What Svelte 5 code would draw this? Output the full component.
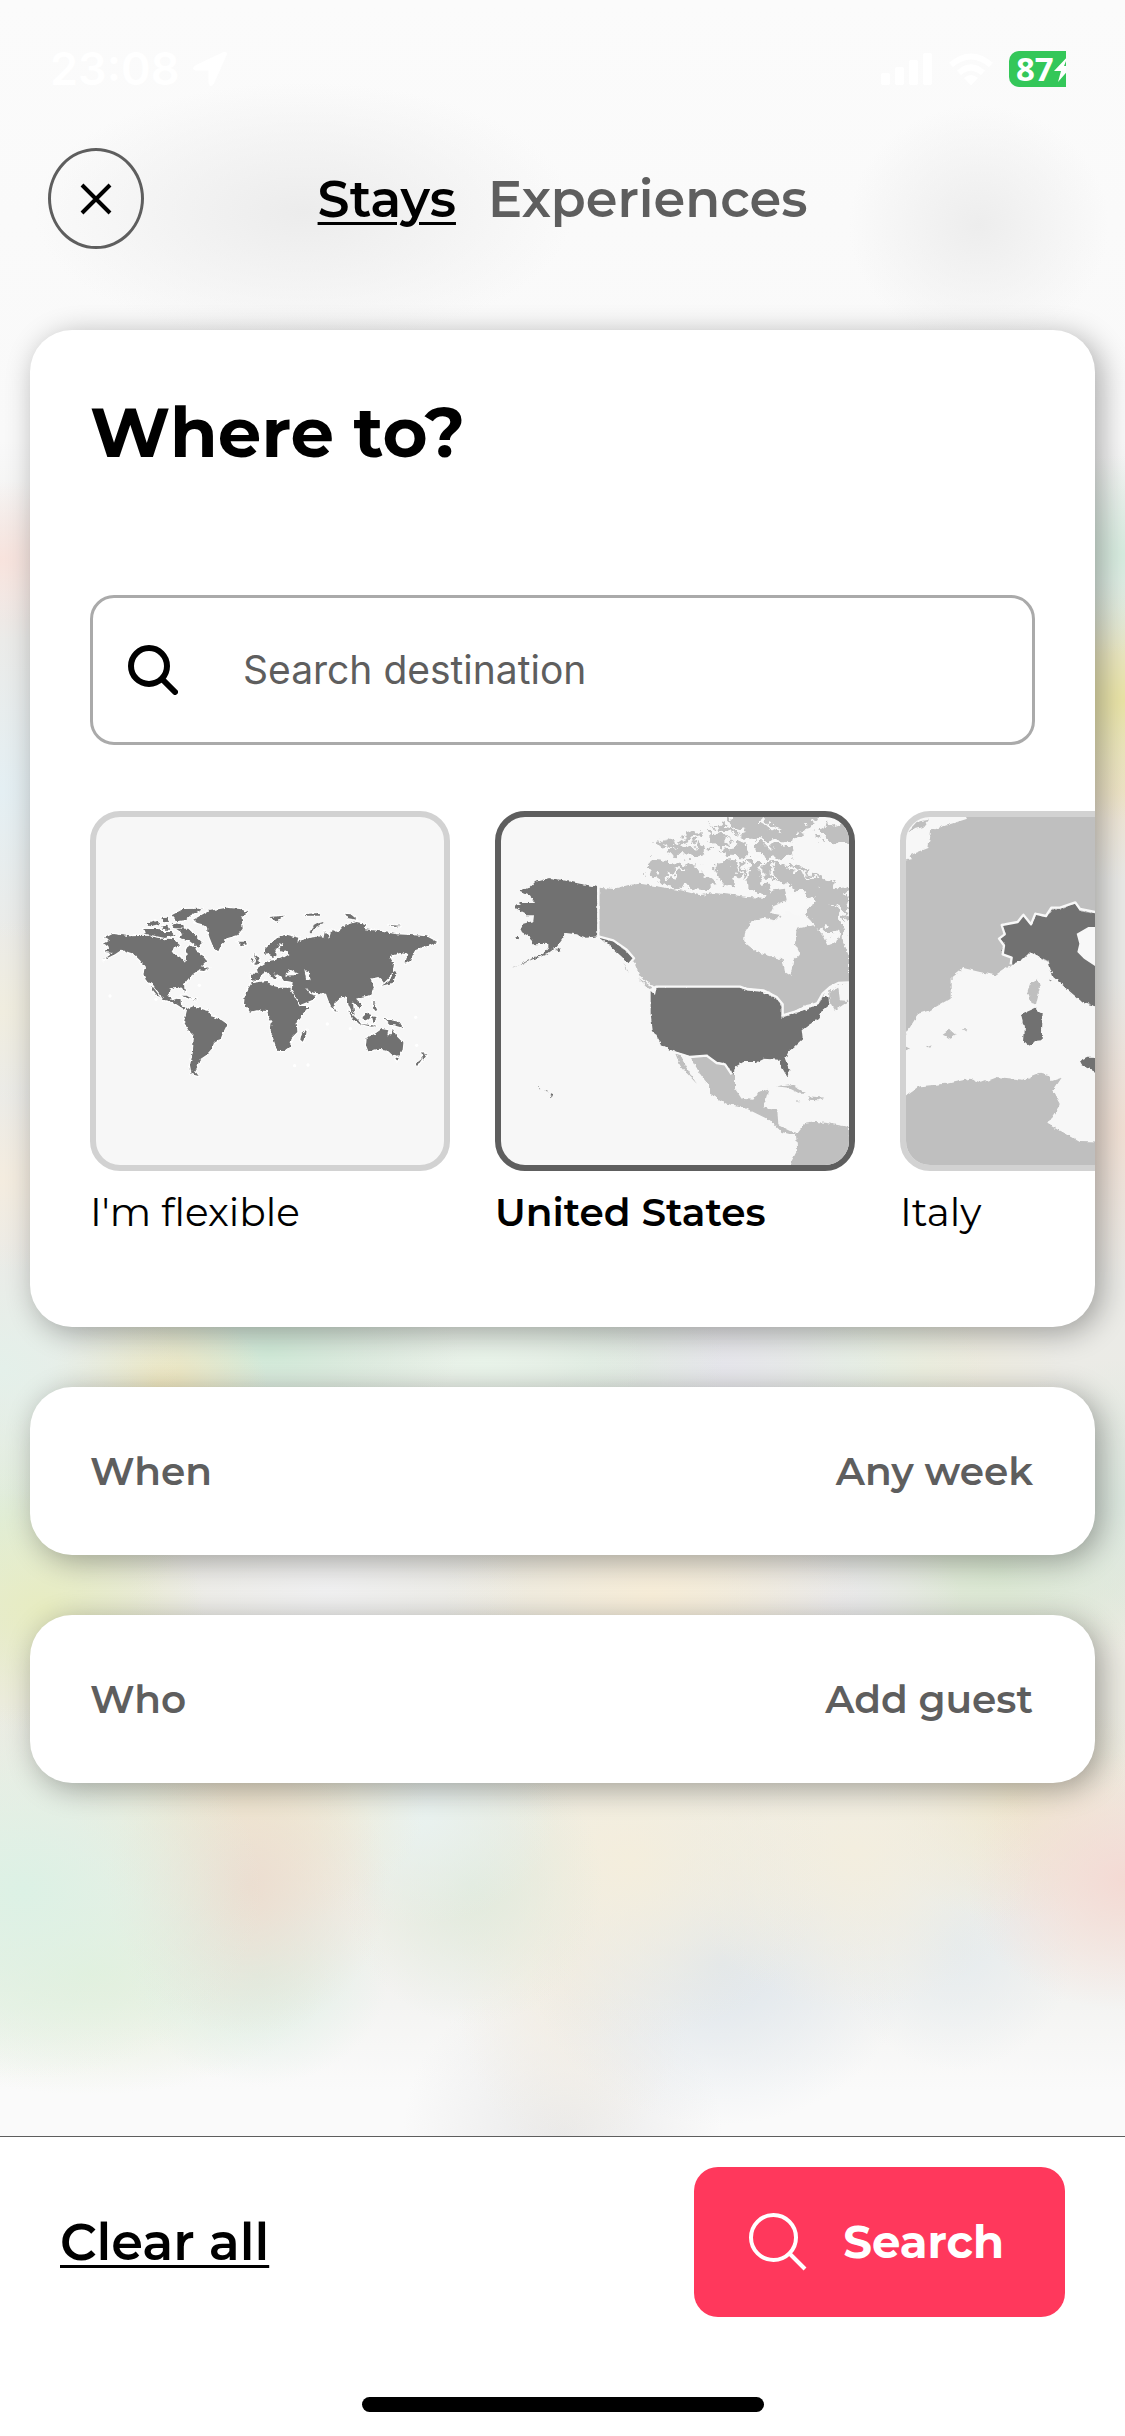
<script>
  let tab = $state('Stays');
  let region = $state('United States');
  let query = $state('');

  const tabs = ['Stays', 'Experiences'];
  const regions = ["I'm flexible", 'United States', 'Italy'];
  const rows = [
    { label: 'When', value: 'Any week' },
    { label: 'Who', value: 'Add guest' }
  ];

  function clearAll() {
    query = '';
    region = "I'm flexible";
  }
</script>

<!-- World map -->
{#snippet world()}
  <svg class="map" viewBox="48 50 1044 1044" aria-hidden="true">
    <filter id="coast-world" x="-5%" y="-5%" width="110%" height="110%">
      <feTurbulence type="fractalNoise" baseFrequency="0.09" numOctaves="3" seed="4" />
      <feDisplacementMap in="SourceGraphic" scale="11" xChannelSelector="R" yChannelSelector="G" />
    </filter>
    <g class="world" filter="url(#coast-world)">
      <path d="M75 412 98 401 150 408 205 406 240 413 280 417 300 435 282 440 275 455 300 470 315 487 320 465 318 448 325 435 345 440 350 455 362 458 380 482 362 498 388 503 372 512 355 510 340 520 325 535 312 552 315 578 306 562 285 560 268 568 265 590 278 600 290 595 302 598 303 614 322 625 335 620 328 632 315 628 280 606 250 598 238 580 220 555 198 540 190 520 195 500 180 480 160 460 125 448 105 462 68 480 98 458 75 455 88 440 72 430 90 420Z" />
      <path d="M216 556 240 588 234 588 218 568Z" />
      <path d="M190 386 235 386 250 395 275 395 284 405 255 413 195 400ZM200 370 225 360 242 370 210 378ZM275 345 310 326 367 325 332 345 315 360 290 362ZM288 385 325 385 365 425 355 442 325 420 298 412 310 400ZM244 378 262 376 268 388 250 388ZM275 372 310 374 312 382 280 380ZM244 354 262 352 266 364 250 366Z" />
      <path d="M340 358 385 332 440 322 480 326 505 336 485 350 488 385 472 405 445 412 425 430 415 453 400 440 388 410 378 375 345 366Z" />
      <path d="M473 424 497 424 501 432 485 437ZM302 586 320 586 336 595 326 594ZM338 596 350 597 346 600Z" />
      <path d="M322 625 340 618 362 625 385 632 398 650 425 660 442 672 430 695 422 715 402 728 395 745 378 765 358 778 352 800 345 812 356 827 335 822 330 795 338 760 342 708 325 690 312 665Z" />
      <path d="M515 548 560 542 572 555 600 562 632 562 645 590 662 620 685 620 665 645 650 665 652 695 635 712 630 738 612 752 592 752 580 715 572 690 575 665 565 650 562 632 530 630 510 635 492 610 495 580Z" />
      <path d="M680 688 678 705 668 724 661 718 665 700Z" />
      <path d="M513 520 535 520 530 505 545 495 565 482 580 480 610 472 628 462 625 452 606 456 598 445 610 428 600 430 586 450 590 465 578 474 570 458 555 460 555 445 578 425 595 410 620 403 655 412 652 424 665 420 690 412 722 408 730 414 735 392 748 412 755 388 775 396 790 378 830 365 858 372 855 387 900 393 950 402 990 404 1040 408 1072 425 1050 435 1030 440 1005 450 990 482 976 490 982 462 960 458 928 468 942 490 937 520 912 548 906 540 895 530 872 535 882 560 870 585 845 590 828 595 845 612 838 622 818 606 825 652 808 618 797 588 780 592 765 605 758 628 745 600 738 580 700 577 675 562 690 580 708 586 695 600 660 614 635 568 638 545 608 540 600 530 590 524 578 514 592 535 584 538 562 514 548 520 535 538 518 544 513 538Z" />
      <path d="M522 462 532 468 542 490 522 494 528 480ZM512 476 521 478 517 488ZM568 350 612 346 590 364ZM795 340 812 342 832 358 805 354ZM670 342 715 338 718 346 675 346ZM925 374 960 376 945 380Z" />
      <path d="M940 514 950 518 938 548 905 556 925 542 936 530ZM804 630 835 660 842 672 820 658ZM838 670 890 676 875 679ZM845 652 866 635 871 652 860 662ZM876 648 890 650 880 666ZM878 600 892 630 884 632ZM912 655 955 664 968 682 930 672ZM764 624 770 634 763 632Z" />
      <path d="M860 712 885 700 905 686 925 690 922 705 935 705 938 685 950 708 970 728 968 748 955 766 935 762 920 748 895 745 865 753 858 735Z" />
      <path d="M944 772 957 772 950 783ZM1024 754 1041 765 1029 778ZM1028 774 1013 796 1007 790Z" />
      <path class="isle" d="M692 398Q698 374 730 368" />
      <path class="lake" d="M618 518 632 508 656 520 640 528 616 529ZM673 510 686 512 692 540 678 536Z" />
    </g>
    <g class="dots">
      <circle cx="358" cy="555" r="5" /><circle cx="90" cy="587" r="5" /><circle cx="228" cy="597" r="5" />
      <circle cx="742" cy="671" r="5" /><circle cx="811" cy="685" r="5" /><circle cx="1007" cy="651" r="5" />
      <circle cx="1010" cy="735" r="5" /><circle cx="644" cy="796" r="5" /><circle cx="684" cy="794" r="5" />
    </g>
  </svg>
{/snippet}

<!-- North America -->
{#snippet america()}
  <svg class="map" viewBox="63 50 1044 1044" aria-hidden="true">
    <filter id="coast-america" x="-5%" y="-5%" width="110%" height="110%">
      <feTurbulence type="fractalNoise" baseFrequency="0.08" numOctaves="3" seed="9" />
      <feDisplacementMap in="SourceGraphic" scale="12" xChannelSelector="R" yChannelSelector="G" />
    </filter>
    <filter id="coast-arctic" x="-5%" y="-5%" width="110%" height="110%">
      <feTurbulence type="fractalNoise" baseFrequency="0.035" numOctaves="4" seed="7" />
      <feDisplacementMap in="SourceGraphic" scale="55" xChannelSelector="R" yChannelSelector="G" />
    </filter>
    <g class="land" filter="url(#coast-america)">
      <path d="M358 262 400 266 440 255 480 250 520 256 600 270 660 285 700 278 760 284 800 290 850 292 880 270 915 265 920 300 880 318 870 338 905 345 880 360 850 352 815 362 795 395 792 425 830 455 880 470 908 478 915 515 932 526 940 480 960 460 945 430 950 385 1000 375 1030 405 1045 435 1070 425 1080 402 1107 465 1107 548 1060 552 1030 580 1020 605 975 615 905 652 905 612 870 577 790 560 525 560 480 530 460 480 400 425 355 408Z" />
      <path d="M630 768 680 766 710 788 735 792 765 825 765 865 785 895 820 898 835 875 865 868 850 922 892 930 895 975 930 992 962 1000 940 1004 905 995 870 960 820 935 790 920 740 910 690 880 690 860 660 820ZM585 757 600 762 615 795 650 850 620 818 600 795Z" />
      <path d="M948 1005 975 970 1010 965 1040 968 1107 980 1120 1110 920 1110 952 1050ZM888 858 930 852 982 880 960 880 925 862ZM985 888 1035 892 1015 900 985 898ZM948 900 962 902 950 904ZM1048 572 1075 562 1080 600 1107 602 1065 630 1048 600ZM474 532 520 562 508 566ZM430 490 446 514 438 508Z" />
    </g>
    <g class="land" filter="url(#coast-arctic)">
      <path d="M850 182 950 196 1000 222 1060 248 1115 300 1100 350 1045 308 1085 365 1095 410 1020 380 980 356 1000 310 990 278 940 262 890 242 850 235Z" />
      <path d="M510 174 560 178 600 184 640 191 660 215 690 235 704 264 640 268 580 260 545 240 500 222Z" />
      <path d="M520 135 580 112 600 118 650 86 650 112 560 142ZM545 160 600 128 645 142 652 116 690 148 640 170 585 166ZM712 186 768 182 782 228 745 254 708 222ZM780 182 844 182 836 235 872 264 845 288 815 264 786 220Z" />
      <path d="M735 50 870 30 1020 30 970 95 935 120 850 120 790 116 800 98 760 84ZM825 134 935 136 940 168 860 174 820 162ZM690 68 745 80 785 105 745 102ZM675 96 720 94 745 124 725 144 700 120ZM722 158 770 130 802 128 802 168 745 166Z" />
      <path d="M1000 92 1050 76 1140 60 1140 135 1040 130 1030 105Z" />
      <path class="channel" d="M560 236Q580 205 612 202M618 262 700 275M796 185 808 262M880 192Q868 220 890 238M790 128 940 130M840 60 900 92M640 120 650 150M790 118 830 124M920 200 1010 240M720 175 950 178" />
      <path class="gulf" d="M915 276 985 286 996 326 950 342 905 338 895 318 922 300Z" />
    </g>
    <g class="country" filter="url(#coast-america)">
      <path d="M115 270 150 262 165 245 208 233 250 240 300 250 352 260 352 408 320 412 290 402 258 398 245 420 230 440 200 462 95 503 150 478 190 460 205 442 205 430 160 432 150 410 120 392 130 370 160 362 162 345 135 345 135 338 105 322 120 308 165 308 150 285Z" />
      <path d="M355 408 400 423 440 455 460 475 448 490 410 455 385 432Z" />
      <path d="M512 572 525 584 530 560 780 560 800 570 850 575 890 595 905 615 905 652 970 630 1015 612 1030 590 1045 588 1048 612 1020 635 1015 655 985 675 965 690 968 715 925 755 915 775 928 810 922 830 905 800 898 778 850 775 830 785 790 785 765 800 760 822 735 790 710 785 680 765 630 768 580 752 545 735 518 690 512 640Z" />
      <path d="M226 450 245 442 240 454ZM105 410 120 410 112 415ZM210 880 220 885 216 893ZM178 860 182 863 178 864ZM196 868 206 873 200 873Z" />
    </g>
    <path class="border" d="M355 258V408L400 420 440 448 462 474 445 494M516 566 528 559H780L800 566 850 570 890 590 908 612 908 645 970 626 1012 608 1028 580 1050 560 1075 548 1107 546M582 755 630 770 680 766 710 788 735 792 755 822" />
  </svg>
{/snippet}

<!-- Western Mediterranean -->
{#snippet italy()}
  <svg class="map" viewBox="78 50 1044 1044" aria-hidden="true">
    <filter id="coast-italy" x="-5%" y="-5%" width="110%" height="110%">
      <feTurbulence type="fractalNoise" baseFrequency="0.05" numOctaves="3" seed="2" />
      <feDisplacementMap in="SourceGraphic" scale="14" xChannelSelector="R" yChannelSelector="G" />
    </filter>
    <g class="land" filter="url(#coast-italy)">
      <path d="M60 184 98 176 90 165 145 143 153 90 200 75 262 55 250 30H1140V640L645 615 520 530 505 485 450 455 425 480 390 495 345 525 300 515 250 503 215 530 215 592 150 630 115 640 78 700 60 720Z" />
      <path d="M60 900 120 858 200 850 270 835 305 847 350 830 430 838 480 817 508 825 515 842 545 832 520 870 542 910 502 970 540 992 600 1025 700 1028 1140 1040V1110H60Z" />
      <path d="M473 535 480 560 468 612 455 608 442 575 450 550ZM188 703 210 688 228 705 212 715ZM245 684 262 684 258 692ZM138 738 152 732 146 742ZM70 735 90 745 70 756ZM85 92 110 65 147 58 130 80Z" />
    </g>
    <g class="country" filter="url(#coast-italy)">
      <path d="M365 375 385 370 415 365 430 343 455 375 470 340 500 348 515 325 540 325 585 310 600 330 645 338 900 350V720L645 618 610 608 560 565 520 530 505 482 450 455 425 480 398 490 395 475 365 455 375 435 358 415 378 400Z" />
      <path d="M425 640 465 622 488 640 485 720 462 722 450 735 432 725 435 680ZM600 785 625 772 720 775V840L640 812 605 795ZM504 538 516 540 508 543Z" />
    </g>
    <path class="sea" d="M900 380H625L590 400 598 430 592 455 612 475 650 500 900 640Z" />
    <path class="border" d="M392 492 395 472 368 462 372 436 357 415 374 402 365 374 413 365 430 343 453 372 466 340 498 347 514 322 540 322 586 306 600 326 650 336" />
  </svg>
{/snippet}

<main class="screen">
  <div class="status">
    <div class="clock">
      <span>23:08</span>
      <svg class="arrow" viewBox="0 0 36 36" aria-hidden="true">
        <path d="M31.500 1Q36 0 34.500 4.500L22 32.500Q20 36 17.500 34.500 16.500 34 16.500 31V19.500H5Q1.500 19.500 1 17.500 1 15.500 4 14Z" />
      </svg>
    </div>
    <div class="signals">
      <svg class="bars" viewBox="0 0 52 33" aria-hidden="true">
        <rect x="0" y="20" width="9" height="12" rx="2" /><rect x="14" y="14" width="9" height="18" rx="2" />
        <rect x="28" y="7" width="9" height="25" rx="2" /><rect x="42" y="0" width="9" height="32" rx="2" />
      </svg>
      <svg class="wifi" viewBox="0 0 46 33" aria-hidden="true">
        <path class="wave" d="M3 12Q23 -5 43 12M11 20Q23 9 35 20" />
        <path d="M16 25Q23 19 30 25L23 32.500Z" />
      </svg>
      <div class="battery">
        <span>87</span>
        <svg viewBox="0 0 12 26" aria-hidden="true"><path d="M14 0 0 15H7L4 26 18 10H10Z" /></svg>
      </div>
    </div>
  </div>

  <header>
    <button class="close" aria-label="Close">
      <svg viewBox="0 0 32 32" aria-hidden="true"><path d="M2 2 30 30M30 2 2 30" /></svg>
    </button>
    <nav>
      {#each tabs as name}
        <button class="tab" class:active={tab === name} onclick={() => (tab = name)}>{name}</button>
      {/each}
    </nav>
  </header>

  <div class="cards">
    <section class="card where">
      <h1>Where to?</h1>
      <label class="search-box">
        <svg viewBox="0 0 50 50" aria-hidden="true"><circle cx="21" cy="21" r="18" /><path d="M34 34 47 47" /></svg>
        <input type="text" aria-label="Search destination" placeholder="Search destination" bind:value={query} />
      </label>
      <div class="regions">
        {#each regions as name, i}
          <button class="region" class:active={region === name} onclick={() => (region = name)}>
            <span class="tile">
              {#if i === 0}{@render world()}{:else if i === 1}{@render america()}{:else}{@render italy()}{/if}
            </span>
            <span class="name">{name}</span>
          </button>
        {/each}
      </div>
    </section>

    {#each rows as row}
      <button class="card row">
        <span>{row.label}</span>
        <span>{row.value}</span>
      </button>
    {/each}
  </div>

  <footer>
    <div class="actions">
      <button class="clear" onclick={clearAll}>Clear all</button>
      <button class="submit">
        <svg viewBox="0 0 58 58" aria-hidden="true"><circle cx="24.500" cy="24.500" r="22.500" /><path d="M40.500 40.500 56 56" /></svg>
        <span>Search</span>
      </button>
    </div>
    <div class="home"></div>
  </footer>
</main>

<style>
  :global(body) {
    margin: 0;
    background: #fff;
  }

  .screen {
    box-sizing: border-box;
    min-height: 100vh;
    display: flex;
    flex-direction: column;
    overflow: hidden;
    font-family: Montserrat, Inter, "Liberation Sans", sans-serif;
    color: #000;
    background:
      radial-gradient(270px 130px at 27% 212px, #ececec, #ececec00),
      radial-gradient(130px 120px at 87% 225px, #ededed, #ededed00),
      radial-gradient(140px 80px at 0 560px, #f8e3dd, #f8e3dd00),
      radial-gradient(180px 150px at 0 790px, #e4eff3, #e4eff300),
      radial-gradient(160px 90px at 0 1010px, #f0eddf, #f0eddf00),
      radial-gradient(160px 90px at 0 1180px, #f4ecdf, #f4ecdf00),
      radial-gradient(180px 130px at 0 1370px, #e4f0ea, #e4f0ea00),
      radial-gradient(140px 100px at 100% 555px, #d8eee1, #d8eee100),
      radial-gradient(180px 120px at 100% 700px, #ebe5a6, #ebe5a600),
      radial-gradient(160px 90px at 100% 790px, #f1e5d0, #f1e5d000),
      radial-gradient(160px 150px at 100% 1130px, #f3e2d6, #f3e2d600),
      radial-gradient(110px 80px at 14% 1385px, #f0e6bc, #f0e6bc00),
      radial-gradient(190px 90px at 24% 1350px, #d0ead8, #d0ead800),
      radial-gradient(160px 100px at 43% 1360px, #e9f4ea, #e9f4ea00),
      radial-gradient(140px 90px at 52% 1360px, #dfebe1, #dfebe100),
      radial-gradient(170px 100px at 64% 1365px, #e6e6ec, #e6e6ec00),
      radial-gradient(140px 100px at 75% 1360px, #e6f0e4, #e6f0e400),
      radial-gradient(140px 90px at 82% 1370px, #eeebda, #eeebda00),
      radial-gradient(160px 140px at 100% 1500px, #dce8df, #dce8df00),
      radial-gradient(160px 120px at 4% 1610px, #e7ecc0, #e7ecc000),
      radial-gradient(180px 160px at 0 1520px, #dfedd9, #dfedd900),
      radial-gradient(200px 90px at 29% 1590px, #f0f0f1, #f0f0f100),
      radial-gradient(210px 100px at 58% 1595px, #f7edd8, #f7edd800),
      radial-gradient(130px 80px at 74% 1600px, #e9e9ec, #e9e9ec00),
      radial-gradient(200px 100px at 89% 1570px, #d8e7d0, #d8e7d000),
      radial-gradient(240px 190px at 2% 1890px, #dcf1e5, #dcf1e500),
      radial-gradient(140px 150px at 22% 1885px, #ecddd0, #ecddd000),
      radial-gradient(180px 130px at 22% 1800px, #f0eacf, #f0eacf00),
      radial-gradient(140px 110px at 37% 1815px, #e9f2f0, #e9f2f000),
      radial-gradient(130px 140px at 42% 1885px, #e1eadd, #e1eadd00),
      radial-gradient(200px 180px at 56% 1860px, #f4eedd, #f4eedd00),
      radial-gradient(180px 160px at 76% 1850px, #f3eedf, #f3eedf00),
      radial-gradient(160px 130px at 100% 1880px, #f4dad4, #f4dad400),
      radial-gradient(150px 120px at 90% 1800px, #efe6cd, #efe6cd00),
      radial-gradient(120px 130px at 85% 1940px, #e5ebee, #e5ebee00),
      radial-gradient(190px 160px at 64% 1965px, #dfe6ec, #dfe6ec00),
      radial-gradient(130px 110px at 23% 1975px, #deefe4, #deefe400),
      radial-gradient(240px 120px at 8% 1975px, #e5f0da, #e5f0da00),
      radial-gradient(120px 190px at 51% 1970px, #f3ede2, #f3ede200),
      radial-gradient(160px 160px at 50% 2136px, #e9e9e9, #e9e9e900),
      linear-gradient(#fbfbfb 0, #f9f9f9 440px, #ebebe9 620px, #ebebe7 1300px, #ecebe2 1700px, #efeee6 1880px, #f3f3f1 1990px, #fafafa 2090px);
  }

  button {
    margin: 0;
    padding: 0;
    border: 0;
    background: none;
    font: inherit;
    color: inherit;
    text-align: left;
    cursor: pointer;
  }

  svg {
    display: block;
    flex: none;
  }

  .status {
    display: flex;
    justify-content: space-between;
    align-items: center;
    padding: 42px 59px 0 50px;
    height: 54px;
    color: #fff;
  }

  .clock,
  .signals {
    display: flex;
    align-items: center;
  }

  .clock {
    gap: 12px;
    font-family: Inter, "Liberation Sans", sans-serif;
    font-size: 45px;
    font-weight: 600;
    line-height: 54px;
  }

  .arrow {
    width: 36px;
    height: 36px;
    fill: #fff;
  }

  .bars {
    width: 52px;
    height: 33px;
    fill: #fff;
  }

  .wifi {
    width: 46px;
    height: 33px;
    margin: 0 15px;
    fill: #fff;
  }

  .wave {
    fill: none;
    stroke: #fff;
    stroke-width: 6;
  }

  .battery {
    box-sizing: border-box;
    display: flex;
    align-items: center;
    justify-content: space-between;
    width: 57px;
    height: 36px;
    padding-left: 7px;
    border-radius: 10px 0 0 10px;
    background: #34c759;
    font-family: "Open Sans", sans-serif;
    font-size: 33px;
    font-weight: 700;
    line-height: 36px;
  }

  .battery svg {
    width: 12px;
    height: 26px;
    overflow: hidden;
    fill: #fff;
  }

  header {
    display: grid;
    grid-template-columns: 96px 1fr 96px;
    align-items: center;
    padding: 52px 48px 81px;
  }

  .close {
    box-sizing: border-box;
    display: grid;
    place-items: center;
    width: 96px;
    height: 101px;
    border: 3px solid #5e5e5e;
    border-radius: 50%;
  }

  .close svg {
    width: 32px;
    height: 32px;
    fill: none;
    stroke: #000;
    stroke-width: 4;
  }

  nav {
    display: flex;
    justify-content: center;
    gap: 32px;
  }

  .tab {
    font-size: 51px;
    font-weight: 600;
    line-height: 62px;
    color: #5e5e5e;
  }

  .tab.active,
  .clear {
    color: #000;
    text-decoration: underline;
    text-decoration-thickness: 3px;
    text-underline-offset: 5px;
  }

  .cards {
    display: flex;
    flex-direction: column;
    gap: 60px;
    padding: 0 30px 60px;
  }

  .card {
    border-radius: 42px;
    background: #fff;
    box-shadow: 6px 6px 30px rgb(0 0 0 / 33%);
  }

  .where {
    padding: 60px 0 90px 60px;
    overflow: hidden;
  }

  h1 {
    margin: 0;
    font-size: 69px;
    font-weight: 700;
    line-height: 84px;
  }

  .search-box {
    box-sizing: border-box;
    display: flex;
    align-items: center;
    gap: 65px;
    height: 150px;
    margin: 121px 60px 66px 0;
    padding: 0 35px;
    border: 3px solid #aaa;
    border-radius: 24px;
  }

  .search-box svg {
    width: 50px;
    height: 50px;
    fill: none;
    stroke: #000;
    stroke-width: 6;
    stroke-linecap: round;
  }

  input {
    flex: 1;
    min-width: 0;
    padding: 0;
    border: 0;
    outline: 0;
    background: none;
    font-family: Inter, "Liberation Sans", sans-serif;
    font-size: 39px;
    line-height: 48px;
    color: #000;
  }

  input::placeholder {
    color: #5e5e5e;
    opacity: 1;
  }

  .regions {
    display: flex;
    gap: 45px;
    overflow-x: auto;
    scrollbar-width: none;
  }

  .region {
    display: flex;
    flex: none;
    flex-direction: column;
    gap: 16px;
    font-size: 39px;
    font-weight: 400;
    line-height: 50px;
  }

  .tile {
    display: block;
    overflow: hidden;
    border: 6px solid #d2d2d2;
    border-radius: 30px;
    background: #f7f7f7;
  }

  .region.active {
    font-weight: 600;
  }

  .region.active .tile {
    border-color: #5e5e5e;
  }

  .map {
    width: 348px;
    height: 348px;
  }

  .world {
    fill: #717171;
    stroke: #fff;
    stroke-width: 7;
    stroke-linejoin: round;
    paint-order: stroke;
  }

  .isle {
    fill: none;
    stroke: #717171;
    stroke-width: 6;
  }

  .lake {
    fill: #fbfbfb;
    stroke: none;
  }

  .dots {
    fill: #fff;
  }

  .land {
    fill: #bfbfbf;
  }

  .country {
    fill: #717171;
  }

  .sea,
  .gulf {
    fill: #f8f8f8;
  }

  .channel {
    fill: none;
    stroke: #f8f8f8;
    stroke-width: 8;
  }

  .border {
    fill: none;
    stroke: #f8f8f8;
    stroke-width: 7;
    stroke-linejoin: round;
  }

  .row {
    display: flex;
    justify-content: space-between;
    align-items: center;
    padding: 60px 62px 60px 60px;
    font-size: 39px;
    font-weight: 600;
    line-height: 48px;
    color: #5e5e5e;
  }

  footer {
    margin-top: auto;
    padding: 30px 60px 24px;
    border-top: 1px solid #5e5e5e;
    background: #fff;
  }

  .actions {
    display: flex;
    justify-content: space-between;
    align-items: center;
  }

  .clear {
    font-size: 51px;
    font-weight: 600;
    line-height: 62px;
  }

  .submit {
    box-sizing: border-box;
    display: flex;
    align-items: center;
    gap: 36px;
    height: 150px;
    padding: 0 61px 0 55px;
    border-radius: 24px;
    background: #ff385c;
    font-size: 45px;
    font-weight: 700;
    line-height: 54px;
    color: #fff;
  }

  .submit svg {
    width: 58px;
    height: 58px;
    fill: none;
    stroke: #fff;
    stroke-width: 4;
  }

  .home {
    width: 402px;
    height: 15px;
    margin: 80px auto 0;
    border-radius: 8px;
    background: #000;
  }
</style>
